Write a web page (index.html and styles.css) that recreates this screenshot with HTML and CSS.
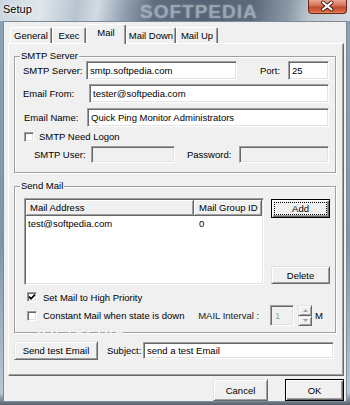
FILE: index.html
```html
<!DOCTYPE html>
<html lang="en">
<head>
  <meta charset="UTF-8">
  <title>Setup</title>
  <link rel="stylesheet" href="styles.css">
</head>
<body>

  <!-- Title bar -->
  <div class="title-bar">
    <span class="title-text">Setup</span>
    <span class="mark">SOFTPEDIA</span>
    <div class="close">
      <svg width="39" height="14" viewBox="0 0 39 14">
        <path d="M15 3.5 L23.5 10.5 M23.5 3.5 L15 10.5" stroke="#4a1a10" stroke-width="4" stroke-linecap="round"/>
        <path d="M15 3.5 L23.5 10.5 M23.5 3.5 L15 10.5" stroke="#fff" stroke-width="2.2" stroke-linecap="round"/>
      </svg>
    </div>
  </div>

  <div class="client">

    <!-- Tabs -->
    <div class="tabs">
      <div class="tab tab-general">General</div>
      <div class="tab tab-exec">Exec</div>
      <div class="tab tab-mail active">Mail</div>
      <div class="tab tab-down">Mail Down</div>
      <div class="tab tab-up">Mail Up</div>
    </div>

    <div class="panel">

      <!-- SMTP SERVER -->
      <fieldset class="group group-smtp">
        <legend>SMTP Server</legend>

        <div class="row row-1">
          <label class="lbl-server">SMTP Server:</label>
          <input type="text" class="txt in-server" value="smtp.softpedia.com">
          <label class="lbl-port">Port:</label>
          <input type="text" class="txt in-port" value="25">
        </div>

        <div class="row row-2">
          <label class="lbl-from">Email From:</label>
          <input type="text" class="txt in-from" value="tester@softpedia.com">
        </div>

        <div class="row row-3">
          <label class="lbl-name">Email Name:</label>
          <input type="text" class="txt in-name" value="Quick Ping Monitor Administrators">
        </div>

        <div class="row row-4">
          <span class="check"></span>
          <span class="check-text">SMTP Need Logon</span>
        </div>

        <div class="row row-5">
          <label class="lbl-user">SMTP User:</label>
          <input type="text" class="txt in-user" disabled>
          <label class="lbl-pass">Password:</label>
          <input type="text" class="txt in-pass" disabled>
        </div>
      </fieldset>

      <!-- SEND MAIL -->
      <fieldset class="group group-send">
        <legend>Send Mail</legend>

        <div class="list-row">
          <div class="list">
            <div class="list-head">
              <div class="head-cell col-addr">Mail Address</div>
              <div class="head-cell col-id">Mail Group ID</div>
            </div>
            <div class="list-item">
              <div class="col-addr">test@softpedia.com</div>
              <div class="col-id">0</div>
            </div>
          </div>
          <div class="list-buttons">
            <button type="button" class="btn btn-default btn-add"><span class="focus">Add</span></button>
            <button type="button" class="btn btn-delete">Delete</button>
          </div>
        </div>

        <div class="row row-priority">
          <span class="check checked">
            <svg width="8" height="8" viewBox="0 0 8 8"><polyline points="1,3.6 3,5.8 7,1.6" fill="none" stroke="#000" stroke-width="1.7"/></svg>
          </span>
          <span class="check-text">Set Mail to High Priority</span>
        </div>

        <div class="row row-constant">
          <span class="check"></span>
          <span class="check-text">Constant Mail when state is down</span>
          <label class="lbl-interval">MAIL Interval :</label>
          <input type="text" class="txt in-interval" value="1" disabled>
          <div class="spin">
            <span class="spin-btn"><svg width="5" height="3" viewBox="0 0 5 3"><polygon points="0,3 2.5,0 5,3" fill="#a0a0a0"/></svg></span>
            <span class="spin-btn"><svg width="5" height="3" viewBox="0 0 5 3"><polygon points="0,0 5,0 2.5,3" fill="#a0a0a0"/></svg></span>
          </div>
          <span class="unit">M</span>
        </div>
      </fieldset>

      <!-- Test mail -->
      <div class="test-row">
        <button type="button" class="btn btn-test">Send test Email</button>
        <label class="lbl-subject">Subject:</label>
        <input type="text" class="txt in-subject" value="send a test Email">
      </div>

      <span class="mark-bottom">SOFTPEDIA</span>
    </div>

    <!-- Dialog buttons -->
    <div class="footer">
      <button type="button" class="btn btn-cancel">Cancel</button>
      <button type="button" class="btn btn-default btn-ok">OK</button>
    </div>
  </div>

</body>
</html>
```

FILE: styles.css
```css
body {
  margin: 0;
  width: 350px;
  height: 405px;
  overflow: hidden;
  font-family: 'Liberation Sans', Arial, sans-serif;
  font-size: 9.5px;
  color: #000;
  background: linear-gradient(to bottom, #8ea2b6, #7f95ab 60%, #b9c7d4 97%, #55606c);
}

/* Aero title bar */
.title-bar {
  position: relative;
  height: 21px;
  display: flex;
  align-items: flex-start;
  background: linear-gradient(100deg, #cbd6e0 0%, #dfe6ec 12%, #b7c4d0 22%, #d2dbe3 28%, #8f9eae 36%, #5f6e7f 44%, #546476 58%, #5c6b7c 72%, #8a98a6 82%, #bcc6cf 88%, #d5dce2 100%);
}

.title-text {
  margin: 3px 0 0 3px;
  font-size: 11px;
  text-shadow: 0 0 5px #fff, 0 0 3px #fff;
}

.mark {
  position: absolute;
  left: 140px;
  top: 1px;
  font-size: 19px;
  font-weight: bold;
  letter-spacing: 1px;
  color: rgba(175, 186, 198, 0.55);
  text-shadow: 0 0 2px rgba(200, 208, 216, 0.5);
}

.close {
  margin-left: auto;
  margin-right: 3px;
  width: 39px;
  height: 14px;
  box-sizing: border-box;
  border: 1px solid #6b2518;
  border-top: none;
  border-radius: 0 0 4px 4px;
  background: linear-gradient(to bottom, #e9a793 0%, #d7785e 40%, #c24a2e 55%, #d5623d 85%, #e58a5a 100%);
  position: relative;
  z-index: 1;
}

.close svg {
  display: block;
  margin: -1px 0 0 -1px;
}

/* Client area */
.client {
  margin-left: 3px;
  width: 344px;
  height: 381px;
  box-sizing: border-box;
  border: 1px solid #7d8b99;
  background: #f0f0f0;
}

.tabs {
  display: flex;
  align-items: flex-end;
  height: 21px;
  padding-left: 6px;
}

.tab {
  height: 16px;
  box-sizing: border-box;
  border: 1px solid #fff;
  border-right-color: #696969;
  border-bottom: none;
  border-radius: 2px 2px 0 0;
  box-shadow: inset -1px 0 #a0a0a0;
  display: flex;
  align-items: center;
  justify-content: center;
  background: #f0f0f0;
}

.tab-general { width: 42px; }
.tab-exec { width: 34px; }
.tab-mail { width: 40px; }
.tab-down { width: 50px; }
.tab-up { width: 42px; }

.tab.active {
  height: 20px;
  margin-bottom: -1px;
  padding-bottom: 4px;
  position: relative;
  z-index: 1;
}

.panel {
  position: relative;
  margin-left: 4px;
  width: 336px;
  height: 333px;
  box-sizing: border-box;
  border: 1px solid;
  border-color: #fff #696969 #696969 #fff;
  box-shadow: inset -1px -1px #a0a0a0;
  padding-left: 5px;
}

/* Etched group boxes */
.group {
  margin: 7px 0 0;
  padding: 0;
  width: 322px;
  box-sizing: border-box;
  border: 1px solid #a0a0a0;
  box-shadow: 1px 1px #fff, inset 1px 1px #fff;
  min-width: 0;
}

.group legend {
  margin-left: 5px;
  padding: 0 1px;
  line-height: 10px;
  background: #f0f0f0;
}

.group-smtp { padding-bottom: 9px; }

.group-send {
  margin-top: 8px;
  padding-bottom: 6px;
}

.row {
  display: flex;
  align-items: center;
  padding-left: 8px;
}

label {
  display: block;
  flex: none;
}

/* Sunken text boxes */
.txt {
  box-sizing: border-box;
  height: 19px;
  margin: 0;
  padding: 0 3px;
  font: inherit;
  color: #000;
  background: #fff;
  border: 1px solid;
  border-color: #a0a0a0 #fff #fff #a0a0a0;
  box-shadow: inset 1px 1px #696969, inset -1px -1px #e3e3e3;
  outline: none;
}

.txt:disabled {
  background: #f0f0f0;
  color: #a0a0a0;
}

.row-1 { height: 19px; }
.row-2 { height: 19px; margin-top: 4px; }
.row-3 { height: 19px; margin-top: 5px; }
.row-4 { height: 11px; margin-top: 4px; }
.row-5 { height: 17px; margin-top: 4px; }

.lbl-server { width: 63px; }
.in-server { width: 151px; }
.lbl-port { width: 28px; margin-left: 23px; }
.in-port { width: 41px; }
.lbl-from { width: 66px; }
.in-from { width: 240px; }
.lbl-name { width: 63px; margin-left: 1px; }
.in-name { width: 242px; }
.lbl-user { width: 57px; margin-left: 11px; }
.in-user { width: 84px; height: 17px; }
.lbl-pass { width: 52px; margin-left: 12px; }
.in-pass { width: 90px; height: 17px; }

/* Checkboxes */
.check {
  flex: none;
  width: 10px;
  height: 10px;
  box-sizing: border-box;
  margin-left: 1px;
  border: 1px solid;
  border-color: #a0a0a0 #fff #fff #a0a0a0;
  box-shadow: inset 1px 1px #696969, inset -1px -1px #e3e3e3;
  background: #fff;
  display: flex;
  align-items: center;
  justify-content: center;
}

.check svg {
  display: block;
}

.check-text {
  margin-left: 5px;
  white-space: nowrap;
}

/* List view */
.list-row {
  display: flex;
  padding-left: 9px;
  margin-top: 7px;
}

.list {
  width: 240px;
  height: 87px;
  box-sizing: border-box;
  border: 1px solid;
  border-color: #a0a0a0 #fff #fff #a0a0a0;
  box-shadow: inset 1px 1px #696969, inset -1px -1px #e3e3e3;
  background: #fff;
  padding: 1px;
}

.list-head {
  display: flex;
  height: 16px;
}

.head-cell {
  box-sizing: border-box;
  height: 16px;
  display: flex;
  align-items: center;
  background: #f0f0f0;
  border-right: 1px solid #696969;
  border-bottom: 1px solid #696969;
  box-shadow: inset 1px 1px #fff, inset -1px -1px #a0a0a0;
}

.col-addr { width: 168px; padding-left: 4px; box-sizing: border-box; }
.col-id { width: 68px; padding-left: 5px; box-sizing: border-box; }

.list-item {
  display: flex;
  height: 14px;
  align-items: center;
}

.list-item .col-addr { padding-left: 2px; }

.list-buttons {
  margin-left: 7px;
  width: 59px;
  display: flex;
  flex-direction: column;
  justify-content: space-between;
}

/* Raised buttons */
.btn {
  box-sizing: border-box;
  margin: 0;
  padding: 0;
  font: inherit;
  color: #000;
  background: #f0f0f0;
  border: 1px solid;
  border-color: #e3e3e3 #696969 #696969 #e3e3e3;
  box-shadow: inset 1px 1px #fff, inset -1px -1px #a0a0a0;
  display: flex;
  align-items: center;
  justify-content: center;
}

.btn-default {
  border: 1px solid #000;
  box-shadow: inset 1px 1px #fff, inset -1px -1px #696969, inset -2px -2px #a0a0a0;
}

.btn-add {
  height: 19px;
  margin-top: 1px;
}

.focus {
  display: flex;
  align-items: center;
  justify-content: center;
  width: 51px;
  height: 11px;
  border: 1px dotted #000;
}

.btn-delete {
  height: 18px;
  margin-bottom: 1px;
}

.row-priority {
  height: 10px;
  margin-top: 7px;
  padding-left: 12px;
}

.row-priority .check,
.row-constant .check { margin-left: 0; }

.row-priority .check-text,
.row-constant .check-text { margin-left: 6px; }

.row-constant {
  height: 21px;
  margin-top: 3px;
  padding-left: 12px;
  padding-right: 12px;
}

.lbl-interval {
  margin-left: auto;
  color: #222;
}

.in-interval {
  width: 24px;
  height: 21px;
  margin-left: 11px;
  padding-left: 4px;
}

.spin {
  margin-left: 4px;
  width: 14px;
  height: 21px;
  display: flex;
  flex-direction: column;
}

.spin-btn {
  flex: 1;
  box-sizing: border-box;
  border: 1px solid;
  border-color: #e3e3e3 #696969 #696969 #e3e3e3;
  box-shadow: inset 1px 1px #fff, inset -1px -1px #a0a0a0;
  display: flex;
  align-items: center;
  justify-content: center;
}

.unit {
  margin-left: 3px;
}

/* Test mail row */
.test-row {
  display: flex;
  align-items: center;
  margin-top: 8px;
}

.btn-test {
  width: 84px;
  height: 19px;
}

.lbl-subject {
  width: 36px;
  margin-left: 9px;
}

.in-subject {
  width: 191px;
  height: 17px;
}

.mark-bottom {
  position: absolute;
  left: 22px;
  top: 279px;
  font-size: 15px;
  line-height: 15px;
  font-weight: bold;
  letter-spacing: 1px;
  color: rgba(255, 255, 255, 0.75);
  text-shadow: 0 0 1px rgba(0, 0, 0, 0.12);
  pointer-events: none;
}

/* Dialog buttons */
.footer {
  display: flex;
  justify-content: flex-end;
  gap: 17px;
  margin-top: 3px;
  padding-right: 2px;
}

.btn-cancel {
  width: 55px;
  height: 22px;
}

.btn-ok {
  width: 59px;
  height: 22px;
}
```
